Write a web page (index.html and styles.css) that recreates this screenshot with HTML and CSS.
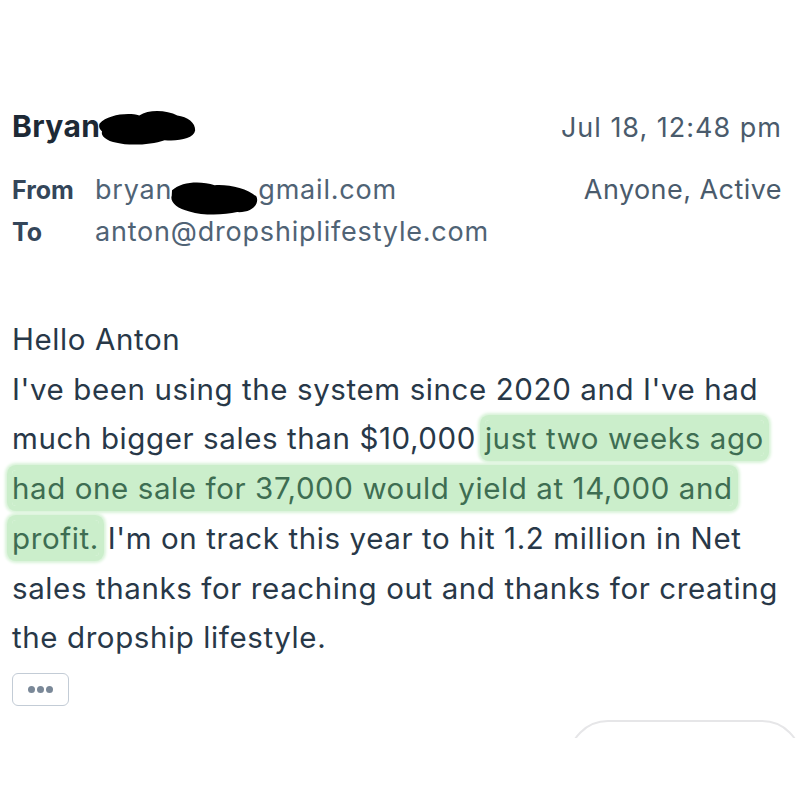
FILE: index.html
```html
<!DOCTYPE html>
<html>
<head>
<meta charset="utf-8">
<link rel="stylesheet" href="styles.css">
</head>
<body>
<main class="mail">
  <header class="head">
    <div class="row top">
      <div class="sender">Bryan<svg class="redact redact-name" viewBox="0 0 100 40" aria-hidden="true"><path d="M2 14 C10 6 30 4 42 8 C52 2 70 4 80 10 C90 12 98 18 97 26 C95 34 80 36 66 34 C52 38 30 38 18 34 C8 32 2 26 4 22 C1 19 1 16 2 14 Z" fill="#000"/></svg></div>
      <div class="date">Jul 18, 12:48 pm</div>
    </div>
    <div class="row meta first">
      <div class="field"><span class="label">From</span><span class="value">bryan<svg class="redact redact-mail" viewBox="0 0 100 40" aria-hidden="true"><path d="M4 14 C14 4 34 2 50 6 C66 4 86 8 96 16 C100 24 92 34 76 34 C62 38 40 40 24 36 C10 34 2 26 4 20 Z" fill="#000"/></svg>gmail.com</span></div>
      <div class="status">Anyone, Active</div>
    </div>
    <div class="row meta">
      <div class="field"><span class="label">To</span><span class="value">anton@dropshiplifestyle.com</span></div>
    </div>
  </header>
  <section class="body">
    <p class="text">Hello Anton<br>I've been using the system since 2020 and I've had much bigger sales than $10,000 <span class="hl">just two weeks ago had one sale for 37,000 would yield at 14,000 and profit.</span> I'm on track this year to hit 1.2 million in Net sales thanks for reaching out and thanks for creating the dropship lifestyle.</p>
    <button class="more" type="button"><span class="dot"></span><span class="dot"></span><span class="dot"></span></button>
  </section>
  <div class="peek"><div class="peek-box"></div></div>
</main>
</body>
</html>
```

FILE: styles.css
```css
* { box-sizing: border-box; }
html, body { margin: 0; padding: 0; background: #fff; }
body { font-family: Inter, "Noto Sans", sans-serif; color: #2b3a4a; }
.mail { width: 800px; height: 800px; padding: 108px 10px 0 12px; overflow: hidden; }
.head { display: flex; flex-direction: column; padding-right: 8px; }
.row { display: flex; justify-content: space-between; align-items: baseline; }
.top { height: 42px; }
.sender { font-size: 30px; font-weight: 700; color: #1d2935; letter-spacing: 0.4px; }
.date { font-size: 27px; color: #4a5b6c; letter-spacing: 1px; }
.meta { height: 42px; line-height: 42px; }
.meta.first { margin-top: 19px; }
.field { display: flex; align-items: baseline; }
.label { width: 83px; font-size: 25px; font-weight: 700; color: #34465a; }
.value { font-size: 27px; color: #506375; letter-spacing: 0.8px; }
.status { font-size: 27px; color: #4a5b6c; letter-spacing: 0.45px; }
.redact { display: inline-block; vertical-align: middle; }
.redact-name { width: 100px; height: 40px; margin-left: -2px; transform: rotate(-3deg) translateY(-2px); }
.redact-mail { width: 92px; height: 38px; margin: 0 -2px 0 -4px; transform: translateY(6px) rotate(3deg); }
.body { margin-top: 62px; }
.text { margin: 0; font-size: 29.5px; line-height: 49.7px; color: #283848; width: 778px; letter-spacing: 0.6px; }
.hl { color: #3e6d52; background: #cbeecb; box-decoration-break: clone; -webkit-box-decoration-break: clone; border-radius: 4px; box-shadow: 0 0 0 5px #cbeecb, 0 0 3px 7px #d9f3d9; }
.more { margin-top: 10px; width: 57px; height: 33px; border: 1.5px solid #c3ccd6; border-radius: 6px; background: #fff; display: flex; align-items: center; justify-content: center; gap: 2px; padding: 0; }
.dot { width: 7px; height: 7px; border-radius: 50%; background: #7a8898; }
.peek { margin-left: 556px; margin-top: 14px; height: 18px; overflow: hidden; width: 234px; }
.peek-box { height: 80px; border: 2px solid #e6e6e8; border-radius: 40px; }
```
